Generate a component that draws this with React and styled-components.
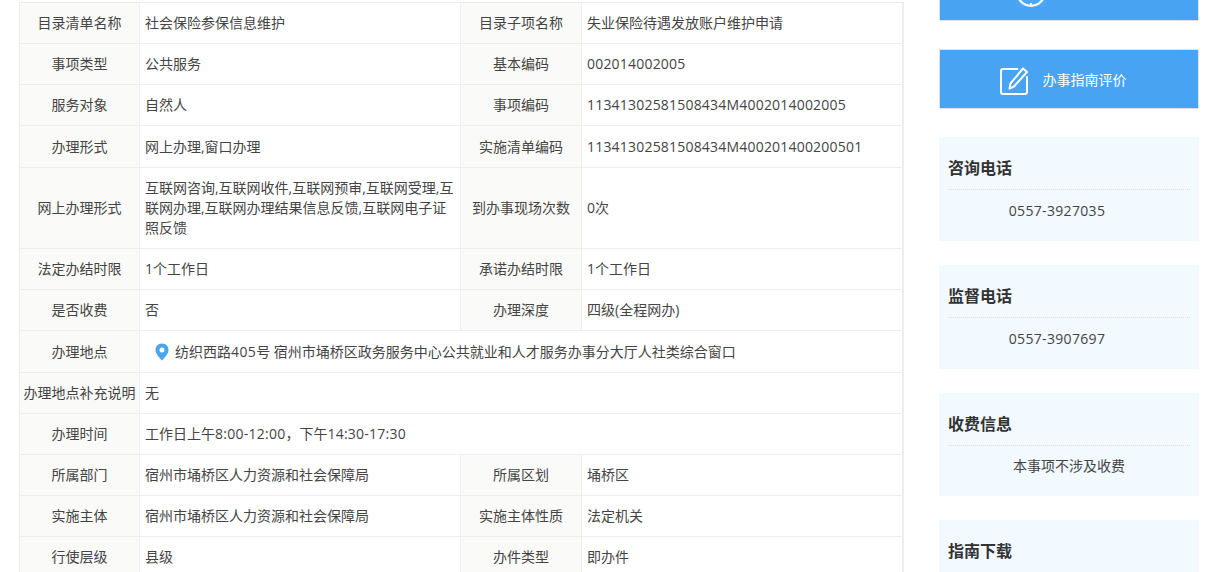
import React from "react";
import styled, { createGlobalStyle } from "styled-components";

const Global = createGlobalStyle`
  html, body { margin: 0; padding: 0; background: #fff; height: 572px; overflow: hidden; }
  body { font-family: "Open Sans", "Noto Sans CJK SC", "Liberation Sans", sans-serif; font-size: 14px; color: #444; }
`;

const Page = styled.div`
  display: flex;
  align-items: flex-start;
  padding: 2px 0 0 19px;
  height: 570px;
  overflow: hidden;
`;

const Main = styled.div`
  width: 884px;
  flex: none;
  border-right: 1px solid #eeeeee;
`;

const Table = styled.table`
  width: 884px;
  table-layout: fixed;
  border-collapse: collapse;
`;

const Row = styled.tr`
  height: ${(p) => p.$h || 41}px;
`;

const Label = styled.td`
  border: 1px solid #eeeeee;
  background: #fafaf8;
  text-align: center;
  padding: 0;
  line-height: 20px;
  color: #444;
`;

const Value = styled.td`
  border: 1px solid #eeeeee;
  padding: 0 5px;
  line-height: 20px;
  color: #444;
`;

const Digits = styled.span`
  letter-spacing: ${(p) => p.$track || 0.2}px;
`;

const Address = styled.div`
  display: flex;
  align-items: center;
  padding-left: 10px;
`;

const Pin = styled.svg`
  width: 14px;
  height: 18px;
  margin-right: 6px;
  flex: none;
`;

const Sidebar = styled.aside`
  width: 260px;
  margin: -41px 0 0 35px;
  flex: none;
  display: flex;
  flex-direction: column;
`;

const ActionButton = styled.div`
  box-sizing: border-box;
  height: 60px;
  margin-bottom: 28px;
  background: #48a4f2;
  border: 1px solid #dde3ea;
  display: flex;
  align-items: center;
  justify-content: center;
  gap: 15px;
  color: #fff;
  padding-right: ${(p) => p.$shift || 0}px;
`;

const TopIcon = styled.svg`
  width: 30px;
  height: 30px;
  margin-top: 1px;
  flex: none;
  background: #4ca8f6;
`;

const EditIcon = styled.svg`
  width: 28px;
  height: 28px;
  margin-top: 3px;
  flex: none;
`;

const Card = styled.section`
  box-sizing: border-box;
  height: ${(p) => p.$h || 104}px;
  margin-bottom: 24px;
  background: #f2f9ff;
  padding: 0 9px;
`;

const CardTitle = styled.h3`
  margin: 0;
  height: 53px;
  box-sizing: border-box;
  padding-top: 19px;
  line-height: 24px;
  font-size: 16px;
  font-weight: 700;
  color: #333;
  border-bottom: 1px dotted #dddddd;
`;

const CardBody = styled.div`
  text-align: center;
  line-height: 20px;
  padding-top: ${(p) => p.$top || 10}px;
  padding-right: ${(p) => p.$shift || 0}px;
  color: #444;
`;

const rows = [
  { h: 41, cells: ["目录清单名称", "社会保险参保信息维护", "目录子项名称", "失业保险待遇发放账户维护申请"] },
  { h: 41, cells: ["事项类型", "公共服务", "基本编码", <Digits>002014002005</Digits>] },
  { h: 41, cells: ["服务对象", "自然人", "事项编码", <Digits>11341302581508434M4002014002005</Digits>] },
  { h: 42, cells: ["办理形式", "网上办理,窗口办理", "实施清单编码", <Digits>11341302581508434M400201400200501</Digits>] },
  { h: 81, cells: ["网上办理形式", "互联网咨询,互联网收件,互联网预审,互联网受理,互联网办理,互联网办理结果信息反馈,互联网电子证照反馈", "到办事现场次数", "0次"] },
  { h: 41, cells: ["法定办结时限", "1个工作日", "承诺办结时限", "1个工作日"] },
  { h: 41, cells: ["是否收费", "否", "办理深度", "四级(全程网办)"] },
];

const rowsBottom = [
  { h: 41, cells: ["所属部门", "宿州市埇桥区人力资源和社会保障局", "所属区划", "埇桥区"] },
  { h: 41, cells: ["实施主体", "宿州市埇桥区人力资源和社会保障局", "实施主体性质", "法定机关"] },
  { h: 41, cells: ["行使层级", "县级", "办件类型", "即办件"] },
];

const FourCells = ({ h, cells }) => (
  <Row $h={h}>
    <Label>{cells[0]}</Label>
    <Value>{cells[1]}</Value>
    <Label>{cells[2]}</Label>
    <Value>{cells[3]}</Value>
  </Row>
);

export default function App() {
  return (
    <>
      <Global />
      <Page>
        <Main>
          <Table>
            <colgroup>
              <col style={{ width: 120 }} />
              <col style={{ width: 321 }} />
              <col style={{ width: 121 }} />
              <col />
            </colgroup>
            <tbody>
              {rows.map((r) => <FourCells key={r.cells[0]} {...r} />)}
              <Row $h={42}>
                <Label>办理地点</Label>
                <Value colSpan={3}>
                  <Address>
                    <Pin viewBox="0 0 14 18">
                      <path fillRule="evenodd" fill="#4ba4ee" d="M7 0.5C3.3 0.5 0.5 3.3 0.5 6.9 0.5 10.8 4.6 14.7 7 17.5 9.4 14.7 13.5 10.8 13.5 6.9 13.5 3.3 10.7 0.5 7 0.5ZM7 4.4A2.5 2.5 0 1 1 7 9.4 2.5 2.5 0 0 1 7 4.4Z" />
                    </Pin>
                    <span>纺织西路<Digits $track={0.4}>405</Digits>号 宿州市埇桥区政务服务中心公共就业和人才服务办事分大厅人社类综合窗口</span>
                  </Address>
                </Value>
              </Row>
              <Row $h={41}>
                <Label>办理地点补充说明</Label>
                <Value colSpan={3}>无</Value>
              </Row>
              <Row $h={41}>
                <Label>办理时间</Label>
                <Value colSpan={3}>工作日上午<Digits $track={0.25}>8:00-12:00</Digits>，下午<Digits $track={0.25}>14:30-17:30</Digits></Value>
              </Row>
              {rowsBottom.map((r) => <FourCells key={r.cells[0]} {...r} />)}
            </tbody>
          </Table>
        </Main>
        <Sidebar>
          <ActionButton $shift={76}>
            <TopIcon viewBox="0 0 30 30" fill="none" stroke="#fff" strokeWidth="2.2">
              <circle cx="15" cy="15" r="13.8" />
              <path d="M15 26v3" />
            </TopIcon>
          </ActionButton>
          <ActionButton $shift={12}>
            <EditIcon viewBox="0 0 28 28" fill="none" stroke="#fff" strokeWidth="2" strokeLinejoin="round" strokeLinecap="round">
              <path d="M17.5 2H3a2 2 0 0 0-2 2v21a2 2 0 0 0 2 2h22a2 2 0 0 0 2-2V10" />
              <path d="M23 1.5 27 5 14 19.5 9.500 21.500 10.500 16.500Z" />
            </EditIcon>
            办事指南评价
          </ActionButton>
          <Card>
            <CardTitle>咨询电话</CardTitle>
            <CardBody $shift={24} $top={11}><Digits $track={0.33}>0557-3927035</Digits></CardBody>
          </Card>
          <Card>
            <CardTitle>监督电话</CardTitle>
            <CardBody $shift={24} $top={11}><Digits $track={0.33}>0557-3907697</Digits></CardBody>
          </Card>
          <Card $h={103}>
            <CardTitle>收费信息</CardTitle>
            <CardBody>本事项不涉及收费</CardBody>
          </Card>
          <Card>
            <CardTitle>指南下载</CardTitle>
          </Card>
        </Sidebar>
      </Page>
    </>
  );
}
